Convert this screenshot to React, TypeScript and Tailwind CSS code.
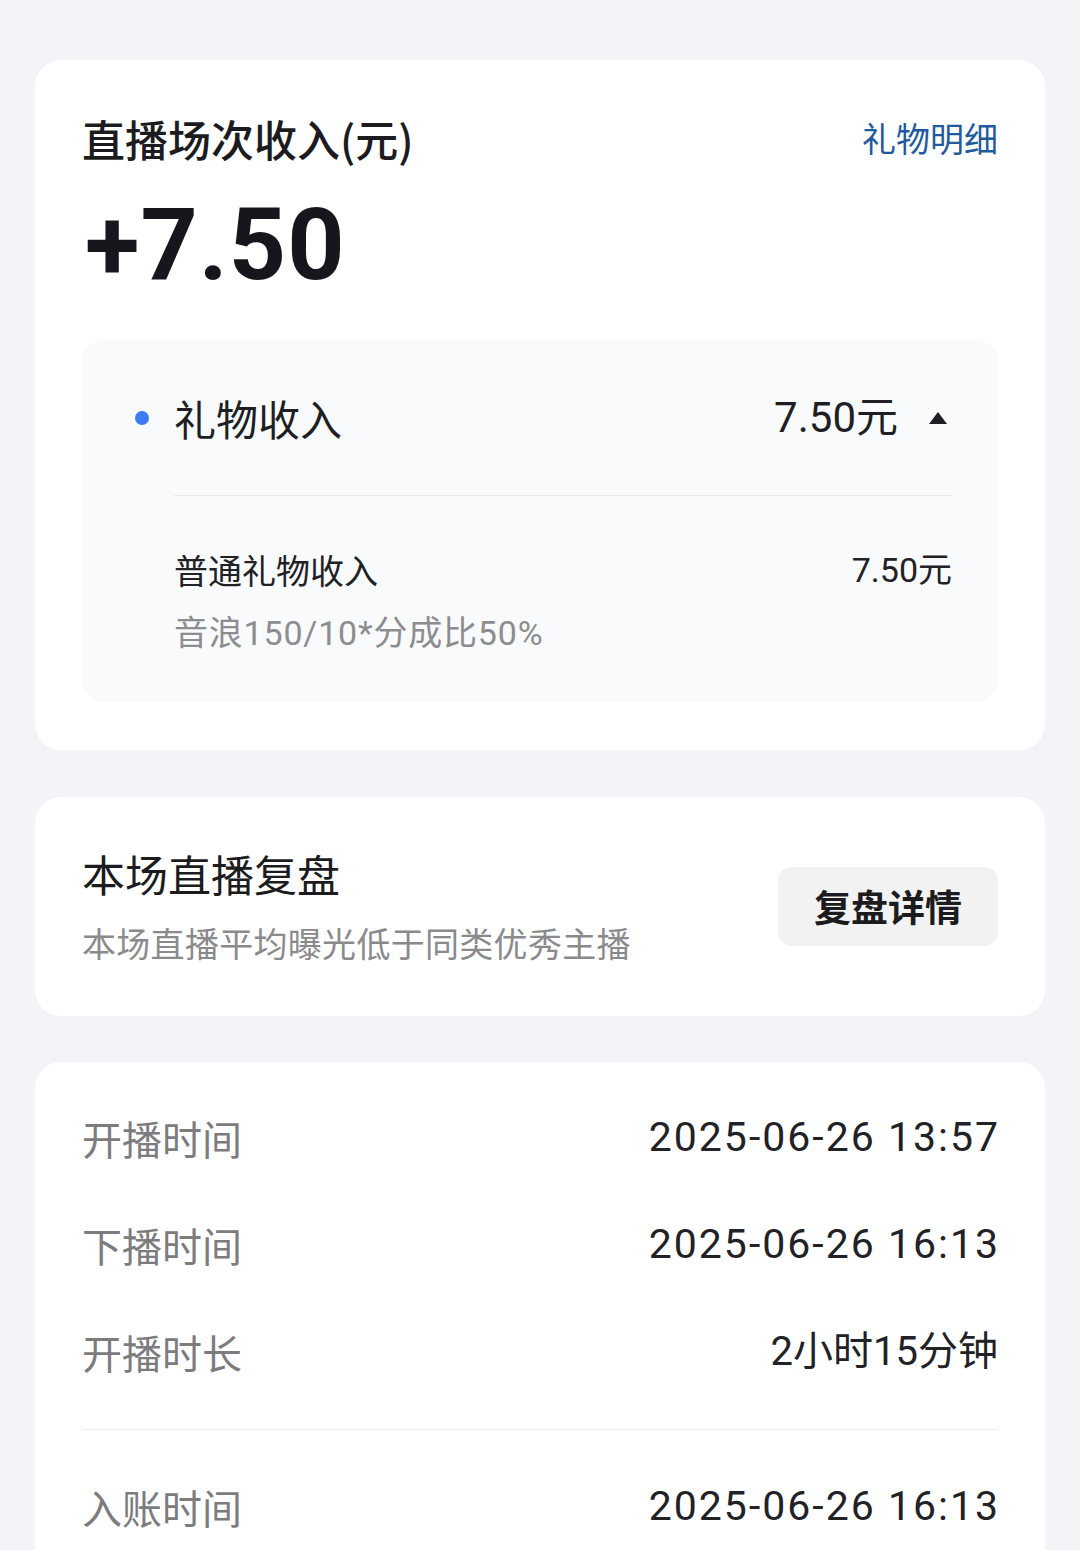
import React from 'react';

const font = { fontFamily: '"Noto Sans CJK SC", sans-serif' };

function InfoRow({ label, value, wide }: { label: string; value: string; wide?: boolean }) {
  return (
    <div className="flex h-[107px] items-center justify-between">
      <span className="text-[40px] leading-none text-[#7c7c7e]">{label}</span>
      <span
        className={
          wide
            ? "-mr-[2px] font-['Roboto','Noto_Sans_CJK_SC',sans-serif] text-[41px] leading-none tracking-[2px] text-[#222226]"
            : "font-['Roboto','Noto_Sans_CJK_SC',sans-serif] text-[40px] leading-none text-[#222226]"
        }
      >
        {value}
      </span>
    </div>
  );
}

export default function App() {
  return (
    <div className="min-h-[1550px] bg-[#f2f4f7] pt-[60px] pb-[40px]" style={font}>
      {/* income card */}
      <div className="mx-[35px] rounded-[26px] bg-white px-[47px] pt-[52px] pb-[48px]">
        <div className="flex h-[52px] items-center justify-between">
          <h2 className="text-[43px] font-medium leading-none text-[#1c1c20]">直播场次收入(元)</h2>
          <span className="text-[34px] leading-none text-[#1f5b9c]">礼物明细</span>
        </div>
        <div className="ml-[3px] mt-[31px] h-[100px] font-['Roboto',sans-serif] text-[100px] font-bold leading-none tracking-[1px] text-[#16161c]">
          +7.50
        </div>

        <div className="mt-[45px] rounded-[22px] bg-[#f8fafc] pt-[38px] pb-[47px] pl-[53px] pr-[46px]">
          <div className="flex h-[80px] items-center">
            <span className="mr-[25px] h-[14px] w-[14px] rounded-full bg-[#3d7cf5]" />
            <span className="text-[42px] leading-none text-[#1f1f23]">礼物收入</span>
            <span className="ml-auto font-['Roboto','Noto_Sans_CJK_SC',sans-serif] text-[42px] leading-none text-[#1f1f23]">7.50元</span>
            <svg className="ml-[30px] mr-[4px]" width="20" height="14" viewBox="0 0 20 14">
              <path d="M10 1 L19 13 L1 13 Z" fill="#1f1f23" />
            </svg>
          </div>
          <div className="ml-[39px] mt-[37px] h-px bg-[#e6e8ec]" />
          <div className="ml-[39px] mt-[52px] flex h-[44px] items-center justify-between">
            <span className="text-[34px] leading-none text-[#222226]">普通礼物收入</span>
            <span className="font-['Roboto','Noto_Sans_CJK_SC',sans-serif] text-[34px] leading-none text-[#222226]">7.50元</span>
          </div>
          <div className="ml-[39px] mt-[19px] flex h-[44px] items-center">
            <span className="font-['Roboto','Noto_Sans_CJK_SC',sans-serif] text-[34px] leading-none tracking-[0.8px] text-[#8d8d90]">音浪150/10*分成比50%</span>
          </div>
        </div>
      </div>

      {/* review card */}
      <div className="mx-[35px] mt-[47px] flex h-[219px] items-center justify-between rounded-[26px] bg-white px-[47px]">
        <div className="flex flex-col">
          <span className="flex h-[50px] items-center text-[43px] leading-none text-[#1c1c20]">本场直播复盘</span>
          <span className="mt-[22px] flex h-[44px] items-center text-[34px] leading-none tracking-[0.3px] text-[#8a8a8d]">本场直播平均曝光低于同类优秀主播</span>
        </div>
        <button className="flex h-[79px] w-[220px] items-center justify-center rounded-[14px] bg-[#f2f2f3] text-[37px] font-bold leading-none text-[#1c1c20]">
          复盘详情
        </button>
      </div>

      {/* time card */}
      <div className="mx-[35px] mt-[46px] rounded-[26px] bg-white px-[47px] pt-[22px] pb-[40px]">
        <InfoRow label="开播时间" value="2025-06-26 13:57" wide />
        <InfoRow label="下播时间" value="2025-06-26 16:13" wide />
        <InfoRow label="开播时长" value="2小时15分钟" />
        <div className="mt-[24px] h-px bg-[#eceef1]" />
        <div className="mt-[23px]">
          <InfoRow label="入账时间" value="2025-06-26 16:13" wide />
        </div>
      </div>
    </div>
  );
}
